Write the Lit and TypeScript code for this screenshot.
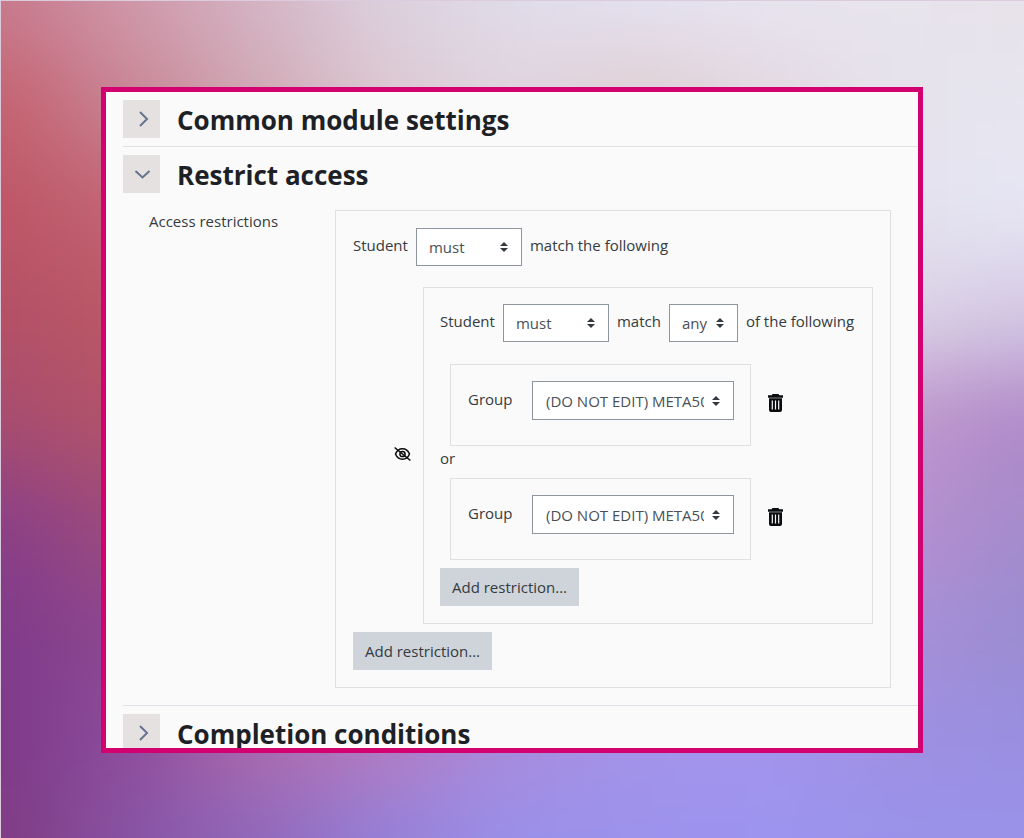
import { LitElement, html, svg, css } from "lit";
import { customElement, property } from "lit/decorators.js";

/* Wallpaper colours on an even grid, blended together by a blur. */
const WALLPAPER = [
  ["#c77a8c", "#cf98aa", "#d4b4c4", "#dcd0de", "#e0dcea", "#e4e1f0", "#e8e4f0", "#e8e4ec", "#e8e2ea"],
  ["#c4606e", "#c88494", "#d0a8b4", "#dcc8d0", "#e0d4de", "#e0cdd0", "#e2d8e0", "#e6e2ec", "#e6e6f0"],
  ["#bd5566", "#c26474", "#c88898", "#d0b0c0", "#d8c8d8", "#e0d4e0", "#e2dce8", "#e4e2ee", "#e6e6f4"],
  ["#b45066", "#bb5866", "#c07080", "#c898b0", "#d0b0c8", "#d8c0d8", "#dcd0e4", "#dcd4e6", "#d4c8e4"],
  ["#a84c70", "#b25468", "#b06080", "#b880a8", "#c090b8", "#c8a0c8", "#c8a8d0", "#c098cc", "#b088c8"],
  ["#8a3f86", "#9e4c7c", "#a05088", "#a868a0", "#b078b8", "#b888c8", "#b890d0", "#b890d0", "#a48bcc"],
  ["#7f3a8a", "#8e4890", "#985098", "#a868a8", "#b078b8", "#a888d0", "#a48cd8", "#a890d8", "#9a8cd0"],
  ["#7f3a8a", "#8c4c9c", "#ae6cac", "#b67cc0", "#a88cdc", "#a494ea", "#a494ee", "#9e90e2", "#998ee0"],
  ["#803a82", "#8854a4", "#9068bc", "#9480d8", "#9a90ea", "#9c92ec", "#9c94f0", "#9a92ea", "#9a92ea"],
];

@customElement("app-wallpaper")
export class AppWallpaper extends LitElement {
  static styles = css`
    :host {
      display: block; box-sizing: border-box; overflow: hidden; background: #ddd0e0;
      border-top: 1px solid #dccbdc; border-left: 1px solid #dccbdc;
    }
    svg { display: block; width: 100%; height: 100%; }
  `;

  render() {
    const last = WALLPAPER.length - 1;
    const tiles = WALLPAPER.flatMap((row, y) =>
      row.map((color, x) => {
        const left = x === 0 ? -40 : x * 10 - 5;
        const top = y === 0 ? -40 : y * 10 - 5;
        const right = x === last ? 120 : x * 10 + 6;
        const bottom = y === last ? 120 : y * 10 + 6;
        return svg`<rect x=${left} y=${top} width=${right - left} height=${bottom - top} fill=${color} />`;
      })
    );
    return html`
      <svg viewBox="0 0 80 80" preserveAspectRatio="none" aria-hidden="true">
        <defs>
          <filter id="soft" x="-40" y="-40" width="160" height="160" filterUnits="userSpaceOnUse" color-interpolation-filters="sRGB">
            <feGaussianBlur stdDeviation="4" />
          </filter>
        </defs>
        <g filter="url(#soft)">${tiles}</g>
      </svg>
    `;
  }
}

@customElement("form-section")
export class FormSection extends LitElement {
  @property() heading = "";
  @property({ type: Boolean }) open = false;

  static styles = css`
    :host { display: block; border-top: 1px solid #dee2e6; padding: 8px 0; }
    :host(:first-of-type) { border-top: 0; }
    .head { display: flex; align-items: center; gap: 17px; }
    .toggle {
      flex: none; display: grid; place-items: center; width: 37px; height: 38px;
      padding: 0 0 0 2px; border: 0; background: #e6e1e1; color: #64748f; cursor: pointer;
    }
    .toggle svg { display: block; }
    h3 { margin: 0; padding-top: 3px; font-size: 26px; line-height: 35px; font-weight: 700; color: #1d2125; white-space: nowrap; }
    .body { padding: 17px 27px 9px 26px; }
  `;

  render() {
    const chevron = this.open ? "M1.5 6 8.500 12.500l7-6.500" : "M6 2 13 9l-7 7";
    return html`
      <div class="head">
        <button class="toggle" aria-expanded=${this.open} aria-label=${this.heading} @click=${() => (this.open = !this.open)}>
          <svg width="18" height="18" viewBox="0 0 18 18" fill="none" stroke="currentColor" stroke-width="2">
            <path d=${chevron} />
          </svg>
        </button>
        <h3>${this.heading}</h3>
      </div>
      ${this.open ? html`<div class="body"><slot></slot></div>` : ""}
    `;
  }
}

@customElement("app-root")
export class AppRoot extends LitElement {
  static styles = css`
    :host {
      display: grid; box-sizing: border-box; height: 100vh; padding: 87px 101px 85px;
      position: relative; font-family: "Open Sans", "Noto Sans", sans-serif;
      font-size: 15px; line-height: 24px; color: #343a40;
    }
    .wallpaper { position: absolute; inset: 0; }
    .card {
      position: relative; overflow: hidden; min-height: 0; box-sizing: border-box;
      padding-left: 17px; border: 5px solid #d3006f; background: #fafafa;
    }
    .field { display: grid; grid-template-columns: 186px minmax(0, 1fr); }
    .name { line-height: 22px; }
    .box { border: 1px solid #dee0e2; }
    .outer { padding: 17px; }
    .nested { flex: 1; padding: 16px 16px 17px; }
    .nested-row { display: flex; align-items: center; gap: 12px; margin: 21px 0 8px; padding-left: 41px; }
    .line { display: flex; align-items: center; gap: 8px; white-space: nowrap; }
    .line span, .line label { padding-bottom: 4px; }
    .rules { margin: 22px 0 8px; }
    .rule { display: flex; align-items: center; gap: 16px; padding-left: 10px; }
    .rule-box { display: flex; justify-content: space-between; width: 301px; box-sizing: border-box; padding: 16px 16px 25px 17px; }
    .rule-box label { line-height: 36px; }
    .or { padding-bottom: 8px; }
    select {
      appearance: none; box-sizing: border-box; width: 106px; height: 38px; margin: 0; padding: 0 29px 0 12px;
      border: 1px solid #8f959e; border-radius: 0; color: #495057; font: inherit;
      background: #fff url("data:image/svg+xml,%3Csvg xmlns='http://www.w3.org/2000/svg' viewBox='0 0 4 5'%3E%3Cpath fill='%23343a40' d='M2 0L0 2h4zm0 5L0 3h4z'/%3E%3C/svg%3E") no-repeat right 13px center / 8px 10px;
    }
    .short { width: 69px; padding-right: 24px; }
    .wide { width: 202px; height: 39px; padding-left: 13px; }
    .add { display: block; height: 38px; padding: 0 12px; border: 0; background: #ced4da; color: #343a40; font: inherit; cursor: pointer; }
    .icon { display: block; padding: 0 0 4px; border: 0; background: none; color: #0b0c0e; cursor: pointer; }
    .icon svg { display: block; }
  `;

  private rule(id: string) {
    return html`
      <div class="rule">
        <div class="box rule-box">
          <label for=${id}>Group</label>
          <select class="wide" id=${id}><option>(DO NOT EDIT) META50</option></select>
        </div>
        <button class="icon" aria-label="Delete">
          <svg width="17" height="18" viewBox="0 0 17 18" fill="currentColor">
            <path d="M5.5 0h6l.8 1.200H16v2.600H1V1.200h3.700z" />
            <path fill-rule="evenodd" d="M2 4.300h13V16a2 2 0 0 1-2 2H4a2 2 0 0 1-2-2zM4.700 6.500v9h1.200v-9zM7.900 6.500v9h1.200v-9zM11.100 6.500v9h1.200v-9z" />
          </svg>
        </button>
      </div>
    `;
  }

  render() {
    return html`
      <app-wallpaper class="wallpaper"></app-wallpaper>
      <main class="card">
        <form-section heading="Common module settings"></form-section>
        <form-section heading="Restrict access" open>
          <div class="field">
            <div class="name">Access restrictions</div>
            <div class="box outer">
              <div class="line">
                <label for="outer-must">Student</label>
                <select id="outer-must"><option>must</option><option>must not</option></select>
                <span>match the following</span>
              </div>
              <div class="nested-row">
                <button class="icon" aria-label="Hidden">
                  <svg width="17" height="16" viewBox="0 0 17 16" fill="none" stroke="currentColor" stroke-width="1.500">
                    <path d="M1.500 8C3 4.200 5.500 2.800 8.500 2.800s5.500 1.400 7 5.200c-1.500 3.800-4 5.200-7 5.200S3 11.800 1.500 8z" />
                    <circle cx="8.500" cy="8" r="2.600" />
                    <path d="M.6 1.500 16.400 14.500" />
                  </svg>
                </button>
                <div class="box nested">
                  <div class="line">
                    <label for="nested-must">Student</label>
                    <select id="nested-must"><option>must</option><option>must not</option></select>
                    <label for="nested-any">match</label>
                    <select class="short" id="nested-any"><option>any</option><option>all</option></select>
                    <span>of the following</span>
                  </div>
                  <div class="rules">
                    ${this.rule("group-1")}
                    <div class="or">or</div>
                    ${this.rule("group-2")}
                  </div>
                  <button class="add">Add restriction...</button>
                </div>
              </div>
              <button class="add">Add restriction...</button>
            </div>
          </div>
        </form-section>
        <form-section heading="Completion conditions"></form-section>
      </main>
    `;
  }
}
